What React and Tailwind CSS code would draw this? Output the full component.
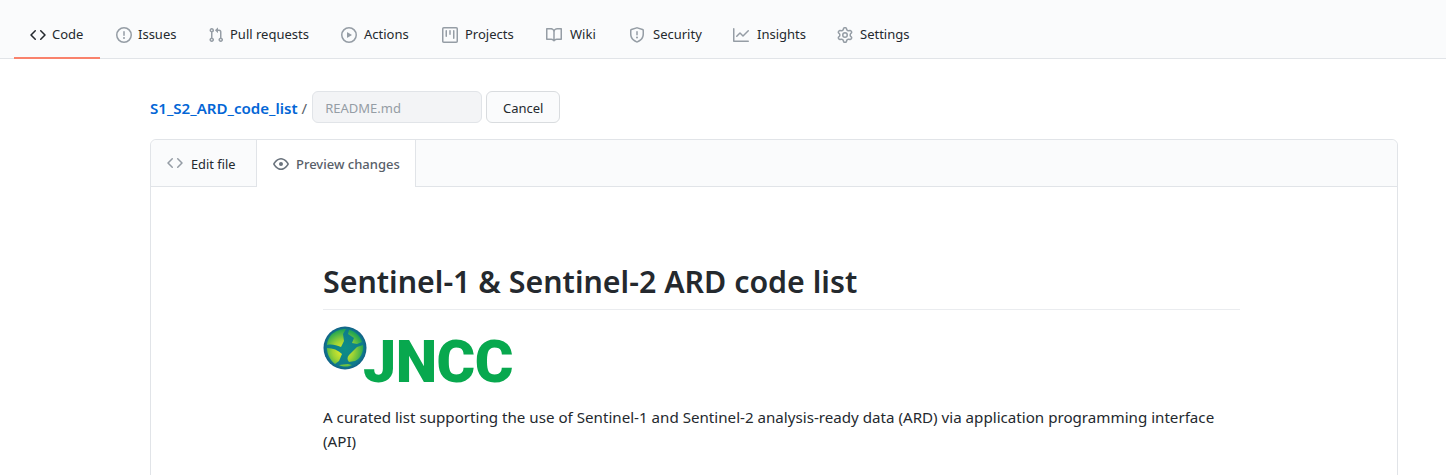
import React from 'react';

const icons = {
    code: 'M4.72 3.22a.75.75 0 011.06 1.06L2.06 8l3.72 3.72a.75.75 0 11-1.06 1.06L.47 8.53a.75.75 0 010-1.06l4.25-4.25zm6.56 0a.75.75 0 10-1.06 1.06L13.94 8l-3.72 3.72a.75.75 0 101.06 1.06l4.25-4.25a.75.75 0 000-1.06l-4.25-4.25z',
    issue: 'M8 1.5a6.5 6.5 0 100 13 6.5 6.5 0 000-13zM0 8a8 8 0 1116 0A8 8 0 010 8zm9 3a1 1 0 11-2 0 1 1 0 012 0zm-.25-6.25a.75.75 0 00-1.5 0v3.5a.75.75 0 001.5 0v-3.5z',
    pull: 'M7.177 3.073L9.573.677A.25.25 0 0110 .854v4.792a.25.25 0 01-.427.177L7.177 3.427a.25.25 0 010-.354zM3.75 2.5a.75.75 0 100 1.5.75.75 0 000-1.5zm-2.25.75a2.25 2.25 0 113 2.122v5.256a2.251 2.251 0 11-1.5 0V5.372A2.25 2.25 0 011.5 3.25zM11 2.5h-1V4h1a1 1 0 011 1v5.628a2.251 2.251 0 101.5 0V5A2.5 2.5 0 0011 2.5zm1 10.25a.75.75 0 111.5 0 .75.75 0 01-1.5 0zM3.75 12a.75.75 0 100 1.5.75.75 0 000-1.5z',
    play: 'M1.5 8a6.5 6.5 0 1113 0 6.5 6.5 0 01-13 0zM8 0a8 8 0 100 16A8 8 0 008 0zM6.379 5.227A.25.25 0 006 5.442v5.117a.25.25 0 00.379.214l4.264-2.559a.25.25 0 000-.428L6.379 5.227z',
    project: 'M1.75 0A1.75 1.75 0 000 1.75v12.5C0 15.216.784 16 1.75 16h12.5A1.75 1.75 0 0016 14.25V1.75A1.75 1.75 0 0014.25 0H1.75zM1.5 1.75a.25.25 0 01.25-.25h12.5a.25.25 0 01.25.25v12.5a.25.25 0 01-.25.25H1.75a.25.25 0 01-.25-.25V1.75zM11.75 3a.75.75 0 00-.75.75v7.5a.75.75 0 001.5 0v-7.5a.75.75 0 00-.75-.75zm-8.25.75a.75.75 0 011.5 0v5.5a.75.75 0 01-1.5 0v-5.5zM8 3a.75.75 0 00-.75.75v3.5a.75.75 0 001.5 0v-3.5A.75.75 0 008 3z',
    book: 'M0 1.75A.75.75 0 01.75 1h4.253c1.227 0 2.317.59 3 1.501A3.744 3.744 0 0111.006 1h4.245a.75.75 0 01.75.75v10.5a.75.75 0 01-.75.75h-4.507a2.25 2.25 0 00-1.591.659l-.622.621a.75.75 0 01-1.06 0l-.622-.621A2.25 2.25 0 005.258 13H.75a.75.75 0 01-.75-.75V1.75zm8.755 3a2.25 2.25 0 012.25-2.25H14.5v9h-3.757c-.71 0-1.4.201-1.992.572l.004-7.322zm-1.504 7.324l.004-5.073-.002-2.253A2.25 2.25 0 005.003 2.5H1.5v9h3.757a3.75 3.75 0 011.994.574z',
    shield: 'M7.467.133a1.75 1.75 0 011.066 0l5.25 1.68A1.75 1.75 0 0115 3.48V7c0 1.566-.32 3.182-1.303 4.682-.983 1.498-2.585 2.813-5.032 3.855a1.7 1.7 0 01-1.33 0c-2.447-1.042-4.049-2.357-5.032-3.855C1.32 10.182 1 8.566 1 7V3.48a1.75 1.75 0 011.217-1.667l5.25-1.68zm.61 1.429a.25.25 0 00-.153 0l-5.25 1.68a.25.25 0 00-.174.238V7c0 1.358.275 2.666 1.057 3.86.784 1.194 2.121 2.34 4.366 3.297a.2.2 0 00.154 0c2.245-.956 3.582-2.104 4.366-3.298C13.225 9.666 13.5 8.36 13.5 7V3.48a.25.25 0 00-.174-.237l-5.25-1.68zM9 10.5a1 1 0 11-2 0 1 1 0 012 0zm-.25-5.75a.75.75 0 10-1.5 0v3a.75.75 0 001.5 0v-3z',
    graph: 'M1.5 1.75a.75.75 0 00-1.5 0v12.5c0 .414.336.75.75.75h14.5a.75.75 0 000-1.5H1.5V1.75zm14.28 2.53a.75.75 0 00-1.06-1.06L10 7.94 7.53 5.47a.75.75 0 00-1.06 0L3.22 8.72a.75.75 0 001.06 1.06L7 7.06l2.47 2.47a.75.75 0 001.06 0l5.25-5.25z',
    gear: 'M7.429 1.525a6.593 6.593 0 011.142 0c.036.003.108.036.137.146l.289 1.105c.147.56.55.967.997 1.189.174.086.341.183.501.29.417.278.97.423 1.53.27l1.102-.303c.11-.03.175.016.195.046.219.31.41.641.573.989.014.031.022.11-.059.19l-.815.806c-.411.406-.562.957-.53 1.456a4.588 4.588 0 010 .582c-.032.499.119 1.05.53 1.456l.815.806c.08.08.073.159.059.19a6.494 6.494 0 01-.573.99c-.02.029-.086.074-.195.045l-1.103-.303c-.559-.153-1.112-.008-1.529.27-.16.107-.327.204-.5.29-.449.222-.851.628-.998 1.189l-.289 1.105c-.029.11-.101.143-.137.146a6.613 6.613 0 01-1.142 0c-.036-.003-.108-.037-.137-.146l-.289-1.105c-.147-.56-.55-.967-.997-1.189a4.502 4.502 0 01-.501-.29c-.417-.278-.97-.423-1.53-.27l-1.102.303c-.11.03-.175-.016-.195-.046a6.492 6.492 0 01-.573-.989c-.014-.031-.022-.11.059-.19l.815-.806c.411-.406.562-.957.53-1.456a4.587 4.587 0 010-.582c.032-.499-.119-1.05-.53-1.456l-.815-.806c-.08-.08-.073-.159-.059-.19a6.44 6.44 0 01.573-.99c.02-.029.086-.075.195-.045l1.103.303c.559.153 1.112.008 1.529-.27.16-.107.327-.204.5-.29.449-.222.851-.628.998-1.189l.289-1.105c.029-.11.101-.143.137-.146zM8 0c-.236 0-.47.01-.701.03-.743.065-1.29.615-1.458 1.261l-.29 1.106c-.017.066-.078.158-.211.224a5.994 5.994 0 00-.668.386c-.123.082-.233.09-.3.071L3.27 2.776c-.644-.177-1.392.02-1.82.63a7.977 7.977 0 00-.704 1.217c-.315.675-.111 1.422.363 1.891l.815.806c.05.048.098.147.088.294a6.084 6.084 0 000 .772c.01.147-.038.246-.088.294l-.815.806c-.474.469-.678 1.216-.363 1.891.2.428.436.835.704 1.218.428.609 1.176.806 1.82.63l1.103-.303c.066-.019.176-.011.299.071.213.143.436.272.668.386.133.066.194.158.212.224l.289 1.106c.169.646.715 1.196 1.458 1.26a8.094 8.094 0 001.402 0c.743-.064 1.29-.614 1.458-1.26l.29-1.106c.017-.066.078-.158.211-.224a5.98 5.98 0 00.668-.386c.123-.082.233-.09.3-.071l1.102.302c.644.177 1.392-.02 1.82-.63.268-.382.505-.789.704-1.217.315-.675.111-1.422-.364-1.891l-.814-.806c-.05-.048-.098-.147-.088-.294a6.1 6.1 0 000-.772c-.01-.147.039-.246.088-.294l.814-.806c.475-.469.679-1.216.364-1.891a7.992 7.992 0 00-.704-1.218c-.428-.609-1.176-.806-1.82-.63l-1.103.303c-.066.019-.176.011-.299-.071a5.991 5.991 0 00-.668-.386c-.133-.066-.194-.158-.212-.224L10.16 1.29C9.99.645 9.444.095 8.701.031A8.094 8.094 0 008 0zm1.5 8a1.5 1.5 0 11-3 0 1.5 1.5 0 013 0zM11 8a3 3 0 11-6 0 3 3 0 016 0z',
    eye: 'M1.679 7.932c.412-.621 1.242-1.75 2.366-2.717C5.175 4.242 6.527 3.5 8 3.5c1.473 0 2.824.742 3.955 1.715 1.124.967 1.954 2.096 2.366 2.717a.119.119 0 010 .136c-.412.621-1.242 1.75-2.366 2.717C10.825 11.758 9.473 12.5 8 12.5c-1.473 0-2.824-.742-3.955-1.715C2.92 9.818 2.09 8.69 1.679 8.068a.119.119 0 010-.136zM8 2c-1.981 0-3.67.992-4.933 2.078C1.797 5.169.88 6.423.43 7.1a1.619 1.619 0 000 1.798c.45.678 1.367 1.932 2.637 3.024C4.329 13.008 6.019 14 8 14c1.981 0 3.67-.992 4.933-2.078 1.27-1.091 2.187-2.345 2.637-3.023a1.619 1.619 0 000-1.798c-.45-.678-1.367-1.932-2.637-3.023C11.671 2.992 9.981 2 8 2zm0 8a2 2 0 100-4 2 2 0 000 4z',
};

const Octicon = ({ name, className }) => (
    <svg viewBox="0 0 16 16" width="16" height="16" fill="currentColor" className={`shrink-0 ${className}`}>
        <path fillRule="evenodd" d={icons[name]} />
    </svg>
);

// label widths and icon gaps follow the reference's font metrics
const navItems = [
    { label: 'Code', icon: 'code', active: true, gap: 'gap-[6px]', width: 'w-[32px]' },
    { label: 'Issues', icon: 'issue', gap: 'gap-[6px]', width: 'w-[38px]' },
    { label: 'Pull requests', icon: 'pull', gap: 'gap-[6px]', width: 'w-[79px]' },
    { label: 'Actions', icon: 'play', gap: 'gap-[7px]', width: 'w-[46px]' },
    { label: 'Projects', icon: 'project', gap: 'gap-[7px]', width: 'w-[49px]' },
    { label: 'Wiki', icon: 'book', gap: 'gap-[8px]', width: 'w-[27px]' },
    { label: 'Security', icon: 'shield', gap: 'gap-[8px]', width: 'w-[48px]' },
    { label: 'Insights', icon: 'graph', gap: 'gap-[8px]', width: 'w-[48px]' },
    { label: 'Settings', icon: 'gear', gap: 'gap-[7px]', width: 'w-[49px]' },
];

const JnccLogo = () => (
    <div className="flex items-start h-[56px] w-[190px]">
        <svg viewBox="0 0 44 44" width="44" height="44" className="shrink-0">
            <defs>
                <radialGradient id="sea" cx="0.5" cy="0.5" r="0.5">
                    <stop offset="0" stopColor="#0d8f86" />
                    <stop offset="0.85" stopColor="#0e7a8c" />
                    <stop offset="1" stopColor="#125f86" />
                </radialGradient>
                <radialGradient id="land" gradientUnits="userSpaceOnUse" cx="20" cy="25" r="21">
                    <stop offset="0" stopColor="#eeee2a" />
                    <stop offset="0.5" stopColor="#9ed335" />
                    <stop offset="1" stopColor="#22a652" />
                </radialGradient>
            </defs>
            <circle cx="22" cy="22" r="21.5" fill="url(#sea)" />
            <g fill="url(#land)">
                <path d="M8 9c4-4 10-6 15-6l-3 5 1 7-3 6c-5-2-9-3-14-2 0-4 2-7 4-10z" />
                <path d="M26 4c6 1 11 6 13 12l-5 2-5-1 2-5-6-4z" />
                <path d="M4 22c6 0 11 2 15 6l-3 7-4 3c-5-4-8-10-8-16z" />
                <path d="M40 19c1 7-3 14-8 16l-6 1c-2-2-2-5 0-7l8-8z" />
                <path d="M16 39l9-1 4 1c-4 2-9 2-13 0z" />
            </g>
        </svg>
        <span className="ml-[-4px] mt-[2px] font-['Roboto',sans-serif] font-black text-[59px] leading-[68px] text-[#08a84e] tracking-[-0.5px]">JNCC</span>
    </div>
);

export default function App() {
    return (
        <div className="h-[475px] overflow-hidden bg-white font-['Noto_Sans','Open_Sans',sans-serif] text-[13px] text-[#24292e]">
            <nav className="flex h-[59px] items-end border-b border-[#e1e4e8] bg-[#fafbfc] pl-[14px]">
                {navItems.map((item) => (
                    <a
                        key={item.label}
                        className={`-mb-px flex h-[48px] items-center border-b-2 px-4 pt-[2px] ${item.gap} ${item.active ? 'border-[#f9826c]' : 'border-transparent'}`}
                    >
                        <Octicon name={item.icon} className={item.active ? 'text-[#24292e]' : 'text-[#959da5]'} />
                        <span className={`whitespace-nowrap ${item.width}`}>{item.label}</span>
                    </a>
                ))}
            </nav>

            <div className="px-[150px] pr-[48px] pt-8">
                <div className="flex items-center">
                    <a className="pt-[2px] text-[15.1px] font-semibold text-[#0366d6]">S1_S2_ARD_code_list</a>
                    <span className="ml-[4px] mr-[5px] pt-[2px] text-[15px] text-[#586069]">/</span>
                    <div className="flex h-[32px] w-[170px] items-center rounded-md border border-[#e1e4e8] bg-[#f3f4f6] px-3 pt-[3px] text-[#959da5]">README.md</div>
                    <button className="ml-1 h-[32px] w-[74px] rounded-md border border-[#d9dcdf] bg-[#fafbfc] pt-[3px] text-[#24292e]">Cancel</button>
                </div>

                <div className="mt-4 h-[600px] rounded-md border border-[#e1e4e8]">
                    <div className="flex h-[47px] rounded-t-md border-b border-[#e1e4e8] bg-[#fafbfc]">
                        <div className="flex w-[106px] items-center gap-2 border-r border-[#e1e4e8] pl-4 text-[12.8px]">
                            <Octicon name="code" className="text-[#959da5]" />
                            <span className="pt-[4px]">Edit file</span>
                        </div>
                        <div className="-mb-px flex h-[47px] w-[159px] items-center gap-[7px] border-r border-[#e1e4e8] bg-white pl-4 text-[13px] font-medium text-[#586069]">
                            <Octicon name="eye" className="text-[#6a737d]" />
                            <span className="pt-[3px]">Preview changes</span>
                        </div>
                    </div>

                    <div className="ml-[172px] w-[917px] pt-[74px]">
                        <h1 className="mt-[-1px] border-b border-[#eaecef] pb-[7px] pt-[2px] text-[30.35px] font-semibold leading-[40px]">Sentinel-1 &amp; Sentinel-2 ARD code list</h1>
                        <div className="mt-4">
                            <JnccLogo />
                        </div>
                        <p className="mt-[23px] text-[15.15px] leading-6">
                            A curated list supporting the use of Sentinel-1 and Sentinel-2 analysis-ready data (ARD) via application programming interface (API)
                        </p>
                    </div>
                </div>
            </div>
        </div>
    );
}
